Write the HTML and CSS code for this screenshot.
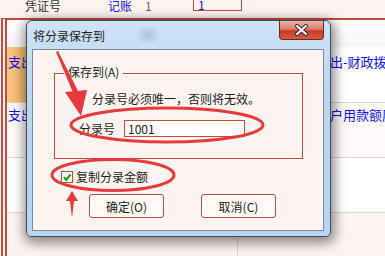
FILE: index.html
```html
<!DOCTYPE html>
<html lang="zh">
<head>
  <meta charset="UTF-8">
  <title>将分录保存到</title>
  <link rel="stylesheet" href="styles.css">
</head>
<body>
<div class="page">

  <!-- 凭证头 -->
  <div class="topbar">
    <span class="lbl">凭证号</span>
    <span class="link">记账</span>
    <span class="num">1</span>
    <span class="vbox">1</span>
  </div>

  <!-- 分录表格 -->
  <div class="grid">
    <div class="row r0"></div>
    <div class="row r1"><span class="cell sel">支出</span><span class="cell right">出-财政拨款</span></div>
    <div class="row r2"><span class="cell first">支出</span><span class="cell right">户用款额度</span></div>
    <div class="row r3"></div>
    <div class="row r4"><span class="vline"></span></div>
  </div>

  <!-- 对话框 -->
  <div class="dialog">
    <div class="titlebar">
      <span class="title">将分录保存到</span>
      <span class="close">
        <svg width="17" height="12" viewBox="0 0 17 12">
          <path d="M4 2 L13 10 M13 2 L4 10" stroke="#3a2a2a" stroke-width="4" stroke-linecap="round"/>
          <path d="M4 2 L13 10 M13 2 L4 10" stroke="#fff" stroke-width="2" stroke-linecap="round"/>
        </svg>
      </span>
    </div>
    <div class="client">
      <div class="group">
        <span class="legend">保存到(A)</span>
        <p class="hint">分录号必须唯一，否则将无效。</p>
        <div class="field"><span class="flabel">分录号</span><span class="input">1001</span></div>
      </div>
      <div class="check">
        <span class="box">
          <svg width="10" height="10" viewBox="0 0 10 10"><path d="M2 5 L4 8 L8.5 2.5" stroke="#17a317" stroke-width="2" fill="none"/></svg>
        </span>
        <span>复制分录金额</span>
      </div>
      <div class="buttons">
        <button>确定(O)</button>
        <button>取消(C)</button>
      </div>
    </div>
  </div>

  <!-- 红色标注 -->
  <svg class="marks" width="385" height="256" viewBox="0 0 385 256">
    <ellipse cx="167" cy="125" rx="96" ry="17" fill="none" stroke="#e8393c" stroke-width="3"/>
    <ellipse cx="113" cy="175" rx="61" ry="15.5" fill="none" stroke="#e8393c" stroke-width="3"/>
    <polygon points="56,52 58,51 79,93 74,95" fill="#e8393c"/>
    <polygon points="65,92 87,90 81,116" fill="#e8393c"/>
    <polygon points="72,191 78,201 74,201 72,218 70,201 66,201" fill="#e8393c"/>
  </svg>

</div>
</body>
</html>
```

FILE: styles.css
```css
body {
  margin: 0;
  background: #fdf3f0;
  font: 12px "Noto Sans CJK SC", sans-serif;
  color: #1c1c1c;
  overflow: hidden;
}
.page { position: relative; width: 385px; height: 256px; overflow: hidden; }

/* 凭证头 */
.topbar { display: flex; height: 18px; }
.topbar span { margin-top: 0; line-height: 12px; white-space: nowrap; }
.lbl { margin-left: 25px; width: 83px; color: #333; }
.link { width: 37px; color: #1515e8; }
.num { width: 48px; color: #666; }
.vbox {
  width: 49px; height: 14px; box-sizing: border-box;
  margin-top: -3px !important;
  border: 1px solid #c24a3e; border-top: none;
  padding: 2px 0 0 4px;
  color: #1515e8;
}

/* 分录表格 */
.grid {
  margin-left: 1px;
  border-top: 2px solid #c24a3e;
  border-left: 6px double #c24a3e;
}
.row { display: flex; }
.r0 { height: 27px; background: linear-gradient(#fff, #f6f6f6); }
.r1 { height: 55px; background: #fff; border-bottom: 1px solid #d6d6d6; }
.r2 { height: 54px; background: #fffaf9; border-bottom: 1px solid #d6d6d6; }
.r3 { height: 54px; background: #fff; border-bottom: 1px solid #d6d6d6; }
.r4 { height: 60px; background: #fdf3f0; }
.cell {
  color: #1010ee; font-size: 13px;
  padding-top: 8px; line-height: 14px;
  white-space: nowrap; overflow: hidden;
}
.sel { width: 30px; padding-left: 1px; background: linear-gradient(90deg, #f8c57f, #f0b264); }
.first { width: 30px; padding-left: 1px; padding-top: 5px; }
.r2 .right { padding-top: 5px; }
.right { margin-left: auto; width: 55px; }
.vline { margin-left: 230px; width: 1px; background: #d6d6d6; }

/* 对话框 */
.dialog {
  position: absolute; left: 26px; top: 20px;
  width: 305px; height: 217px; box-sizing: border-box;
  border: 1px solid #3d4a58; border-radius: 6px 6px 5px 5px;
  background: radial-gradient(ellipse 14px 10px at 121px 14px, #a9c4e6, transparent),
              linear-gradient(#cfe3f8, #bcd7f2 30%, #b7d4f1);
  box-shadow: 1px 3px 12px 3px rgba(0, 0, 0, .45);
  display: flex; flex-direction: column;
}
.titlebar { height: 28px; display: flex; align-items: center; }
.title { padding-left: 6px; font-size: 12px; color: #1e1e1e; }
.close {
  align-self: flex-start;
  margin-left: auto; margin-right: 6px;
  width: 45px; height: 19px; box-sizing: border-box;
  border: 1px solid #6b2a1f; border-top: none;
  border-radius: 0 0 4px 4px;
  background: linear-gradient(#ebb3a5, #dc7d69 45%, #c63b27 55%, #d65a40);
  display: flex; align-items: center; justify-content: center;
}
.client {
  flex: 1;
  margin: 0 6px 5px 5px;
  border: 1px solid #7f8a96;
  background: #fdf4f1;
}

.group {
  margin: 23px 0 0 21px;
  width: 249px; height: 86px; box-sizing: border-box;
  border: 1px solid #c24a3e;
}
.legend {
  display: block; width: fit-content;
  margin: -9px 0 0 9px; padding: 0 4px;
  background: #fdf4f1; line-height: 14px;
}
.hint { margin: 13px 0 0 37px; line-height: 14px; }
.field { display: flex; align-items: center; margin: 14px 0 0 24px; }
.flabel { width: 45px; }
.input {
  width: 121px; height: 17px; box-sizing: border-box;
  border: 1px solid #c24a3e; background: #fff;
  padding-left: 3px; line-height: 15px;
}

.check { display: flex; align-items: center; gap: 3px; margin: 12px 0 0 28px; line-height: 12px; }
.box {
  width: 12px; height: 12px; box-sizing: border-box;
  border: 1px solid #c24a3e; background: #fff;
  display: flex; align-items: center; justify-content: center;
}

.buttons { display: flex; gap: 37px; margin: 11px 0 0 56px; }
button {
  width: 75px; height: 24px; padding: 0;
  border: 1px solid #c24a3e; border-radius: 3px;
  background: #fffaf6;
  font: inherit; color: #1c1c1c;
}

.marks { position: absolute; left: 0; top: 0; pointer-events: none; }
```
